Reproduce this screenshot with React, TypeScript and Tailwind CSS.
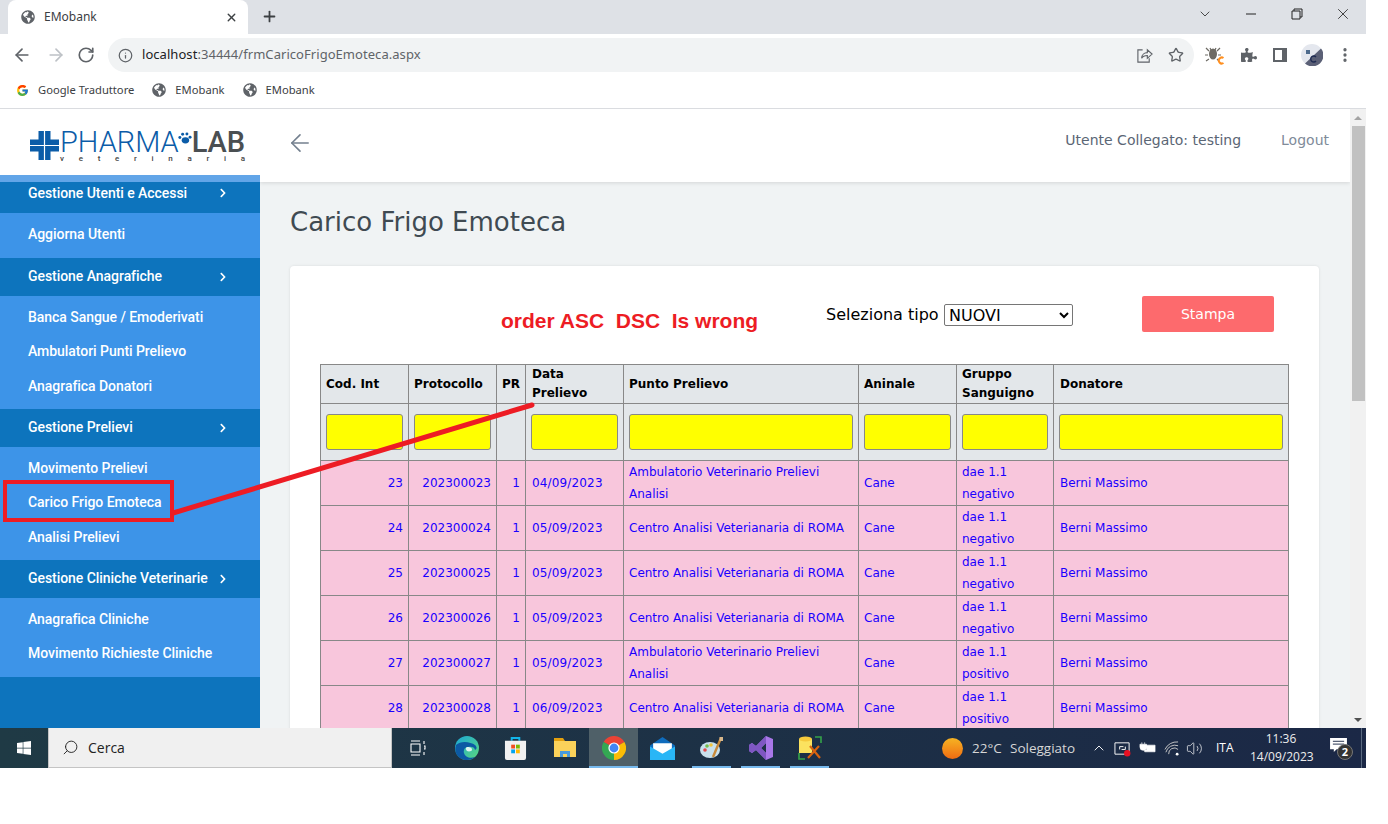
import { ArrowLeft, ArrowRight, RotateCw, Info, Star, Plus, X, ChevronDown, ChevronUp, Search, Volume2, MoreVertical } from "lucide-react";
import { FaGlobeAmericas, FaPuzzlePiece, FaWindows, FaChevronRight } from "react-icons/fa";
import { FcGoogle } from "react-icons/fc";

const dejavu = "font-['DejaVu_Sans',sans-serif]";

const rows = [
  { id: 23, prot: "202300023", date: "04/09/2023", punto: "Ambulatorio Veterinario Prelievi Analisi", gruppo: "dae 1.1 negativo" },
  { id: 24, prot: "202300024", date: "05/09/2023", punto: "Centro Analisi Veterianaria di ROMA", gruppo: "dae 1.1 negativo" },
  { id: 25, prot: "202300025", date: "05/09/2023", punto: "Centro Analisi Veterianaria di ROMA", gruppo: "dae 1.1 negativo" },
  { id: 26, prot: "202300026", date: "05/09/2023", punto: "Centro Analisi Veterianaria di ROMA", gruppo: "dae 1.1 negativo" },
  { id: 27, prot: "202300027", date: "05/09/2023", punto: "Ambulatorio Veterinario Prelievi Analisi", gruppo: "dae 1.1 positivo" },
  { id: 28, prot: "202300028", date: "06/09/2023", punto: "Centro Analisi Veterianaria di ROMA", gruppo: "dae 1.1 positivo" },
];

const menu = [
  { title: "Gestione Anagrafiche", height: "h-[113px]", items: ["Banca Sangue / Emoderivati", "Ambulatori Punti Prelievo", "Anagrafica Donatori"] },
  { title: "Gestione Prelievi", height: "h-[113px]", items: ["Movimento Prelievi", "Carico Frigo Emoteca", "Analisi Prelievi"] },
  { title: "Gestione Cliniche Veterinarie", height: "h-[79px]", items: ["Anagrafica Cliniche", "Movimento Richieste Cliniche"] },
];

function MenuHeader({ title }: { title: string }) {
  return (
    <div className="h-[38px] bg-[#0d74bd] flex items-center pl-[28px] pb-[2px] text-white">
      <span className="w-[190px] truncate">{title}</span>
      <FaChevronRight className="w-[10px] h-[10px] mt-[1px]" />
    </div>
  );
}

function MenuItems({ items, height }: { items: string[]; height: string }) {
  return (
    <div className={`${height} bg-[#3d94e8] pt-[4.2px] text-white`}>
      {items.map((item) => (
        <div key={item} className="h-[34.5px] flex items-center pl-[28px]">
          {item}
        </div>
      ))}
    </div>
  );
}

function Logo() {
  return (
    <div className="h-[66px] bg-white flex items-start pl-[30px] pt-[22px] font-['Roboto',sans-serif] tracking-normal">
      <svg viewBox="0 0 29 29" className="w-[29px] h-[29px] shrink-0">
        <path d="M8.500 0h12v29h-12zM0 8.500h29v12H0z" fill="#0b5ca8" />
        <path d="M14.500 0v29M0 14.500h29" stroke="#fff" strokeWidth="1.200" />
      </svg>
      <div className="w-[185px] ml-[1px]">
        <div className="flex items-end h-[22px] leading-[22px]">
          <span className="text-[29px] text-[#0b5ca8] font-light">PHARMA</span>
          <svg viewBox="0 0 16 14" className="w-[15px] h-[13px] mb-[8px] -ml-[2px] shrink-0">
            <ellipse cx="9" cy="9" rx="4" ry="3.400" fill="#0b5ca8" />
            <circle cx="3" cy="6" r="1.600" fill="#0b5ca8" />
            <circle cx="6" cy="2.400" r="1.600" fill="#0b5ca8" />
            <circle cx="10.600" cy="2.200" r="1.600" fill="#0b5ca8" />
            <circle cx="14" cy="5.600" r="1.600" fill="#0b5ca8" />
          </svg>
          <span className="text-[29px] text-[#4a4f52] font-medium">LAB</span>
        </div>
        <div className="flex justify-between text-[8px] leading-[8px] mt-[2px] text-[#444]">
          {"veterinaria".split("").map((c, i) => (
            <span key={i}>{c}</span>
          ))}
        </div>
      </div>
    </div>
  );
}

function Sidebar() {
  return (
    <aside className="w-[260px] shrink-0 h-full flex flex-col bg-[#0d74bd] font-['Roboto',sans-serif] font-medium text-[14px] tracking-[-0.05px]">
      <Logo />
      <div className="h-[7px] bg-[#62a5e8] shrink-0" />
      <div className="h-[31px] bg-[#0d74bd] flex items-start pt-[1px] pl-[28px] text-white">
        <span className="w-[190px]">Gestione Utenti e Accessi</span>
        <FaChevronRight className="w-[10px] h-[10px] mt-[5px]" />
      </div>
      <MenuItems items={["Aggiorna Utenti"]} height="h-[45px]" />
      {menu.map((section) => (
        <div key={section.title}>
          <MenuHeader title={section.title} />
          <MenuItems items={section.items} height={section.height} />
        </div>
      ))}
    </aside>
  );
}

function DataTable() {
  const th = "border border-[#888] px-[5px] font-bold text-black text-left align-middle leading-[19px]";
  const tf = "border border-[#888] border-t-[#f0f0f0] px-[5px] align-middle";
  const td = "border border-[#888] px-[5px] align-middle text-[#1a00ff] leading-[22px]";
  const filter = "w-full h-[36px] block bg-[#ffff00] border border-[#888] rounded-[3px]";
  return (
    <table className={`table-fixed border-collapse w-[968px] text-[12px] ${dejavu}`}>
      <colgroup>
        <col className="w-[88px]" />
        <col className="w-[88px]" />
        <col className="w-[29px]" />
        <col className="w-[98px]" />
        <col className="w-[235px]" />
        <col className="w-[98px]" />
        <col className="w-[97px]" />
        <col className="w-[235px]" />
      </colgroup>
      <thead className="bg-[#e3e7ea]">
        <tr className="h-[39px]">
          <th className={th}>Cod. Int</th>
          <th className={th}>Protocollo</th>
          <th className={th}>PR</th>
          <th className={`${th} pl-[6px]`}>Data Prelievo</th>
          <th className={th}>Punto Prelievo</th>
          <th className={th}>Aninale</th>
          <th className={th}>Gruppo Sanguigno</th>
          <th className={`${th} pl-[6px]`}>Donatore</th>
        </tr>
        <tr className="h-[57px]">
          <td className={tf}><input className={filter} /></td>
          <td className={tf}><input className={filter} /></td>
          <td className={tf}></td>
          <td className={tf}><input className={filter} /></td>
          <td className={tf}><input className={filter} /></td>
          <td className={tf}><input className={filter} /></td>
          <td className={tf}><input className={filter} /></td>
          <td className={tf}><input className={filter} /></td>
        </tr>
      </thead>
      <tbody className="bg-[#f8c6dc]">
        {rows.map((r) => (
          <tr key={r.id} className="h-[45px]">
            <td className={`${td} text-right`}>{r.id}</td>
            <td className={`${td} text-right`}>{r.prot}</td>
            <td className={`${td} text-right`}>1</td>
            <td className={`${td} pl-[6px] tracking-[0.15px]`}>{r.date}</td>
            <td className={td}>{r.punto}</td>
            <td className={td}>Cane</td>
            <td className={td}>{r.gruppo}</td>
            <td className={`${td} pl-[6px]`}>Berni Massimo</td>
          </tr>
        ))}
      </tbody>
    </table>
  );
}

function Content() {
  return (
    <div className={`flex-1 min-w-0 h-full flex flex-col overflow-hidden ${dejavu}`}>
      <header className="h-[73px] shrink-0 bg-white shadow-[0_1px_4px_rgba(0,0,0,0.12)] flex items-center pl-[26px] pr-[21px] z-10 pb-[6px]">
        <ArrowLeft className="w-[28px] h-[28px] text-[#74808f]" strokeWidth={1.4} />
        <span className="ml-auto text-[14px] text-[#5b6675] -mt-[4px]">Utente Collegato: testing</span>
        <span className="ml-[40px] text-[14px] text-[#808b99] -mt-[4px]">Logout</span>
      </header>
      <main className="flex-1 bg-[#f0f3f4] pl-[30px] pr-[31px] overflow-hidden">
        <h1 className="text-[26px] leading-[30px] text-[#3f4a52] mt-[25px]">Carico Frigo Emoteca</h1>
        <section className="mt-[29px] bg-white rounded-[4px] shadow-[0_0_3px_rgba(0,0,0,0.1)] pt-[30px] pl-[30px] pb-[30px] min-h-[500px]">
          <div className="flex items-start h-[68px]">
            <span className="ml-[181px] mt-[13px] w-[325px] font-['Liberation_Sans',sans-serif] font-bold text-[21px] leading-[24px] text-[#ed1c24]">
              order ASC&nbsp; DSC&nbsp; Is wrong
            </span>
            <span className="mt-[9px] text-[16px] leading-[20px] text-black w-[118px]">Seleziona tipo</span>
            <select className="mt-[8px] w-[129px] h-[22px] border border-[#767676] rounded-[2px] bg-white text-black text-[16px] leading-[20px]">
              <option>NUOVI</option>
            </select>
            <button className="ml-[69px] w-[132px] h-[36px] bg-[#fd6a6d] rounded-[2px] text-white text-[14px]">Stampa</button>
          </div>
          <DataTable />
        </section>
      </main>
    </div>
  );
}

function ScrollBar() {
  return (
    <div className="w-[16px] shrink-0 h-full bg-[#f1f1f1] flex flex-col items-center">
      <div className="h-[17px] flex items-center shrink-0">
        <div className="w-0 h-0 border-x-[4px] border-x-transparent border-b-[4px] border-b-[#a3a3a3]" />
      </div>
      <div className="w-[13px] h-[275px] bg-[#c1c1c1] shrink-0" />
      <div className="mt-auto h-[17px] flex items-center">
        <div className="w-0 h-0 border-x-[4px] border-x-transparent border-t-[4px] border-t-[#505050]" />
      </div>
    </div>
  );
}

function ChromeBar() {
  return (
    <div className="shrink-0 font-['Noto_Sans',sans-serif]">
      {/* tab strip */}
      <div className="h-[34px] bg-[#dee1e6] flex items-end relative">
        <div className="ml-[8px] w-[240px] h-[34px] bg-white rounded-t-[8px] flex items-center pl-[13px] pr-[10px]">
          <FaGlobeAmericas className="w-[14px] h-[14px] text-[#5f6368]" />
          <span className="ml-[9px] text-[12px] text-[#3c4043]">EMobank</span>
          <X className="ml-auto w-[13px] h-[13px] text-[#3c4043]" strokeWidth={2.5} />
        </div>
        <Plus className="ml-[13px] mb-[9px] w-[17px] h-[17px] text-[#3c4043]" strokeWidth={2.5} />
        <div className="ml-auto mr-[14px] h-[34px] flex items-center pb-[6px] text-[#222]">
          <ChevronDown className="w-[16px] h-[16px]" strokeWidth={1.2} />
          <svg viewBox="0 0 12 12" className="w-[12px] h-[12px] ml-[32px]"><path d="M1 6h10" stroke="currentColor" strokeWidth="1" /></svg>
          <svg viewBox="0 0 12 12" className="w-[12px] h-[12px] ml-[34px]"><path d="M3 3V1h8v8H9M1 3h8v8H1z" stroke="currentColor" fill="none" strokeWidth="1" /></svg>
          <X className="w-[18px] h-[18px] ml-[31px]" strokeWidth={1.1} />
        </div>
      </div>
      {/* toolbar */}
      <div className="h-[38px] bg-white pt-[4px] flex items-start text-[#5f6368]">
        <div className="h-[34px] flex items-center">
          <ArrowLeft className="ml-[12px] w-[20px] h-[20px]" strokeWidth={2} />
          <ArrowRight className="ml-[14px] w-[20px] h-[20px] text-[#bdc1c6]" strokeWidth={2} />
          <RotateCw className="ml-[11px] w-[18px] h-[18px]" strokeWidth={2.2} />
        </div>
        <div className="ml-[13px] w-[1086px] h-[34px] rounded-full bg-[#f1f3f4] flex items-center pl-[10px] pr-[10px]">
          <Info className="w-[15px] h-[15px]" strokeWidth={2} />
          <span className="ml-[9px] text-[13px] tracking-[0.05px] text-[#5f6368]">
            <span className="text-[#202124]">localhost</span>:34444/frmCaricoFrigoEmoteca.aspx
          </span>
          <svg viewBox="0 0 18 18" className="ml-auto w-[17px] h-[17px]" fill="none" stroke="currentColor" strokeWidth="1.200">
            <path d="M7 3H2v13h12v-4M6 12c0-4 3-6 6-6V3l5 4.500L12 12V9c-3 0-5 1-6 3z" />
          </svg>
          <Star className="ml-[15px] w-[16px] h-[16px]" strokeWidth={2} />
        </div>
        <div className="h-[34px] flex items-center">
          <div className="ml-[11px] w-[20px] h-[20px] relative">
            <svg viewBox="0 0 20 20" className="w-[20px] h-[20px]">
              <ellipse cx="8" cy="9" rx="4" ry="5.500" fill="#6d6a64" />
              <path d="M4 6 1 3M12 6l3-3M3 10H0M13 10h3M4 14l-3 2M5 3l1 2M11 3l-1 2M12 14l2 2" stroke="#6d6a64" strokeWidth="1.200" />
              <path d="M18.500 13a3 3 0 1 0 0 5" stroke="#ff8f1f" strokeWidth="2" fill="none" />
            </svg>
          </div>
          <FaPuzzlePiece className="ml-[16px] w-[16px] h-[16px]" />
          <svg viewBox="0 0 14 14" className="ml-[16px] w-[14px] h-[14px]">
            <path d="M0 0h14v14H0z" fill="#5f6368" />
            <path d="M2 2h7v10H2z" fill="#fff" />
          </svg>
          <svg viewBox="0 0 22 22" className="ml-[14px] w-[22px] h-[22px]">
            <circle cx="11" cy="11" r="11" fill="#e4e7ee" />
            <path d="M20 4.500A11 11 0 0 1 4 19.500z" fill="#5b6076" />
            <path d="M5 6h4v4H5z" fill="#4d6a8c" />
            <path d="M15 13a3 3 0 1 0 0 4" stroke="#1f2b52" strokeWidth="1.400" fill="none" />
          </svg>
          <MoreVertical className="ml-[13px] w-[18px] h-[18px]" strokeWidth={2.4} />
        </div>
      </div>
      {/* bookmarks */}
      <div className="h-[37px] bg-white border-b border-[#dadce0] flex items-center text-[11.200px] text-[#3c4043] pl-[16px]">
        <FcGoogle className="w-[13px] h-[13px]" />
        <span className="ml-[9px]">Google Traduttore</span>
        <FaGlobeAmericas className="ml-[18px] w-[14px] h-[14px] text-[#5f6368]" />
        <span className="ml-[9px]">EMobank</span>
        <FaGlobeAmericas className="ml-[18px] w-[14px] h-[14px] text-[#5f6368]" />
        <span className="ml-[9px]">EMobank</span>
      </div>
    </div>
  );
}

function TaskCell({ children, active, bar }: { children: React.ReactNode; active?: boolean; bar?: boolean }) {
  return (
    <div className={`w-[49px] h-[40px] flex items-center justify-center relative ${active ? "bg-[#4f6068]" : ""}`}>
      {children}
      {bar && <div className={`absolute bottom-0 h-[2px] bg-[#76b9ed] ${active ? "inset-x-0" : "inset-x-[5px]"}`} />}
    </div>
  );
}

function Taskbar() {
  return (
    <div className="h-[40px] shrink-0 bg-gradient-to-r from-[#1f3a45] to-[#1b2846] flex items-center text-white font-['Open_Sans',sans-serif]">
      <div className="w-[48px] flex justify-center">
        <FaWindows className="w-[16px] h-[16px]" />
      </div>
      <div className="w-[344px] h-[40px] bg-[#f0f0f0] border border-[#c4c4c4] border-t-0 flex items-center pl-[13px] text-[#222]">
        <Search className="w-[17px] h-[17px] -scale-x-100" strokeWidth={1.3} />
        <span className="ml-[9px] text-[14px]">Cerca</span>
      </div>
      <div className="w-[25px] flex justify-center ml-[13px]">
        <svg viewBox="0 0 16 16" className="w-[16px] h-[16px]" fill="none" stroke="#fff" strokeWidth="1.100">
          <path d="M1 1h9M1 15h9M1 4h9v8H1zM14 1v3M14 6h1v3h-1M14 12v3" />
        </svg>
      </div>
      <div className="flex ml-[12px]">
        <TaskCell>
          <svg viewBox="0 0 24 24" className="w-[24px] h-[24px]">
            <defs>
              <linearGradient id="edgeTop" x1="0" y1="0" x2="1" y2="1">
                <stop offset="0" stopColor="#1ba7d8" />
                <stop offset="1" stopColor="#5bd97c" />
              </linearGradient>
            </defs>
            <circle cx="12" cy="12" r="12" fill="url(#edgeTop)" />
            <path d="M1 9c-3 9 4 15 11 15 3 0 6-1 8-3-5 2-10 0-11-4-1-3 1-6 4-6 3-1 7 0 7 3 3-2 1-4 0-5C16 6 6 4 1 9z" fill="#0c59a4" />
            <path d="M12 11c2 0 5 0 5 3 0 1-3 2-5 1-1-1-2-3 0-4z" fill="#dff3ef" />
          </svg>
        </TaskCell>
        <TaskCell>
          <svg viewBox="0 0 24 26" className="w-[23px] h-[25px]">
            <path d="M8 5V2h8v3" fill="none" stroke="#12b5ea" strokeWidth="2" />
            <path d="M1 5h22v18a2 2 0 0 1-2 2H3a2 2 0 0 1-2-2z" fill="#f1f1f1" />
            <path d="M7.500 9h4v4h-4z" fill="#f25022" />
            <path d="M12.500 9h4v4h-4z" fill="#7fba00" />
            <path d="M7.500 14h4v4h-4z" fill="#00a4ef" />
            <path d="M12.500 14h4v4h-4z" fill="#ffb900" />
          </svg>
        </TaskCell>
        <TaskCell>
          <svg viewBox="0 0 24 22" className="w-[24px] h-[22px]">
            <path d="M1 1h9l2 3H1z" fill="#e4a00e" />
            <path d="M1 4h22v16H1z" fill="#fbd25a" />
            <path d="M7 14h10v6H7z" fill="#4a9bdc" />
            <path d="M10 17h4v3h-4z" fill="#fbd25a" />
          </svg>
        </TaskCell>
        <TaskCell active bar>
          <svg viewBox="0 0 24 24" className="w-[24px] h-[24px]">
            <path d="M12 12 1.600 6A12 12 0 0 1 22.400 6z" fill="#ea4335" />
            <path d="M12 12 22.400 6A12 12 0 0 1 12 24z" fill="#fbbc05" />
            <path d="M12 12 12 24A12 12 0 0 1 1.600 6z" fill="#34a853" />
            <circle cx="12" cy="12" r="5.600" fill="#fff" />
            <circle cx="12" cy="12" r="4.400" fill="#4285f4" />
          </svg>
        </TaskCell>
        <TaskCell>
          <svg viewBox="0 0 24 22" className="w-[25px] h-[23px]">
            <path d="M12 0 24 8v14H0V8z" fill="#0f6cbd" />
            <path d="M3 6h18v6l-9 5-9-5z" fill="#fff" />
            <path d="M0 9l12 7 12-7v13H0z" fill="#29b6f6" />
          </svg>
        </TaskCell>
        <TaskCell bar>
          <svg viewBox="0 0 24 24" className="w-[24px] h-[24px]">
            <ellipse cx="10" cy="14" rx="10" ry="8" fill="#c9e1ec" />
            <circle cx="5" cy="14" r="1.800" fill="#e34b4b" />
            <circle cx="7" cy="10" r="1.800" fill="#74bd4a" />
            <circle cx="11" cy="9" r="1.800" fill="#f2c53d" />
            <path d="M21 2 13 21" stroke="#c98a3a" strokeWidth="2.400" />
            <path d="M19.500 1h3.500v4h-3.500z" fill="#d8b78b" />
          </svg>
        </TaskCell>
        <TaskCell bar>
          <svg viewBox="0 0 24 24" className="w-[24px] h-[24px]">
            <path d="M17 0l7 3v18l-7 3L7 14l-4 3-3-2V9l3-2 4 3zM17 7l-5 5 5 5z" fill="#a877e8" fillRule="evenodd" />
            <path d="M17 0v7l-5 5 5 5v7L7 14l-4 3-3-2V9l3-2 4 3z" fill="#7e57c2" />
          </svg>
        </TaskCell>
        <TaskCell bar>
          <svg viewBox="0 0 24 24" className="w-[24px] h-[24px]">
            <path d="M1 3h13v14H1z" fill="#fbe25f" />
            <ellipse cx="7.500" cy="3" rx="6.500" ry="2.500" fill="#f5c93c" />
            <path d="M17 1h6v6M1 17v6h6" stroke="#35a34a" strokeWidth="1.600" fill="none" />
            <path d="M10 22 21 10M12 10l10 12" stroke="#d9630f" strokeWidth="2.200" />
          </svg>
        </TaskCell>
      </div>
      <div className="ml-[108px] w-[21px] h-[21px] rounded-full bg-gradient-to-b from-[#f5b323] to-[#ee6a12] shrink-0" />
      <span className="ml-[9px] text-[13.500px] text-[#d6d6d6] w-[29px] whitespace-nowrap">22°C</span>
      <span className="ml-[9px] text-[13.500px] text-[#d6d6d6] w-[65px] whitespace-nowrap">Soleggiato</span>
      <ChevronUp className="ml-[16px] w-[16px] h-[16px]" strokeWidth={1.4} />
      <svg viewBox="0 0 18 18" className="ml-[7px] w-[17px] h-[17px]" fill="none" stroke="#fff" strokeWidth="1">
        <path d="M1 3h15v12H1zM6 10V7h4M12 7v3H8" />
        <circle cx="14" cy="14" r="3.400" fill="#e81123" stroke="none" />
      </svg>
      <svg viewBox="0 0 18 12" className="ml-[8px] w-[17px] h-[12px]" fill="#fff">
        <path d="M3 0v2M6 0v2M1 2h7v3a3 3 0 0 1-7 0zM8 3h9v7H6V8h2z" stroke="#fff" strokeWidth="0.700" />
      </svg>
      <svg viewBox="0 0 16 16" className="ml-[8px] w-[15px] h-[15px]" fill="none" stroke="#ccc" strokeWidth="1">
        <path d="M1 9a14 14 0 0 1 14-8M2 12a10 10 0 0 1 13-7M5 14a6 6 0 0 1 10-5" />
        <circle cx="14" cy="14" r="1.500" fill="#fff" stroke="none" />
      </svg>
      <Volume2 className="ml-[7px] w-[17px] h-[17px]" strokeWidth={1} />
      <span className="ml-[13px] text-[12px] w-[24px] whitespace-nowrap">ITA</span>
      <div className="ml-[10px] w-[62px] text-center text-[12px] leading-[18px] text-[#eee]">
        <div>11:36</div>
        <div>14/09/2023</div>
      </div>
      <div className="ml-[18px] relative w-[22px] h-[20px]">
        <svg viewBox="0 0 18 16" className="w-[17px] h-[15px]">
          <path d="M0 0h18v12H7l-3 3v-3H0z" fill="#fff" />
          <path d="M3 3.500h12M3 6.500h12" stroke="#1b2846" strokeWidth="1" />
        </svg>
        <div className="absolute -right-[1px] top-[6px] w-[16px] h-[16px] rounded-full bg-[#333] border border-[#777] text-[11px] leading-[14px] font-bold text-center">2</div>
      </div>
      <div className="ml-auto mr-[4px] w-px h-[40px] bg-[#5a6a80]" />
    </div>
  );
}

export default function App() {
  return (
    <div className="w-[1388px] h-[824px] bg-white relative overflow-hidden">
      <div className="w-[1366px] h-[768px] flex flex-col">
        <ChromeBar />
        <div className="flex-1 min-h-0 flex">
          <Sidebar />
          <Content />
          <ScrollBar />
        </div>
        <Taskbar />
      </div>
      {/* annotation painted over the screenshot */}
      <div className="absolute left-[3px] top-[480px] w-[171px] h-[42px] border-[4px] border-[#ed1c24]" />
      <svg className="absolute left-0 top-0 w-[1388px] h-[824px] pointer-events-none">
        <path d="M173 513 L532 405" stroke="#ed1c24" strokeWidth="5" strokeLinecap="round" />
      </svg>
    </div>
  );
}
